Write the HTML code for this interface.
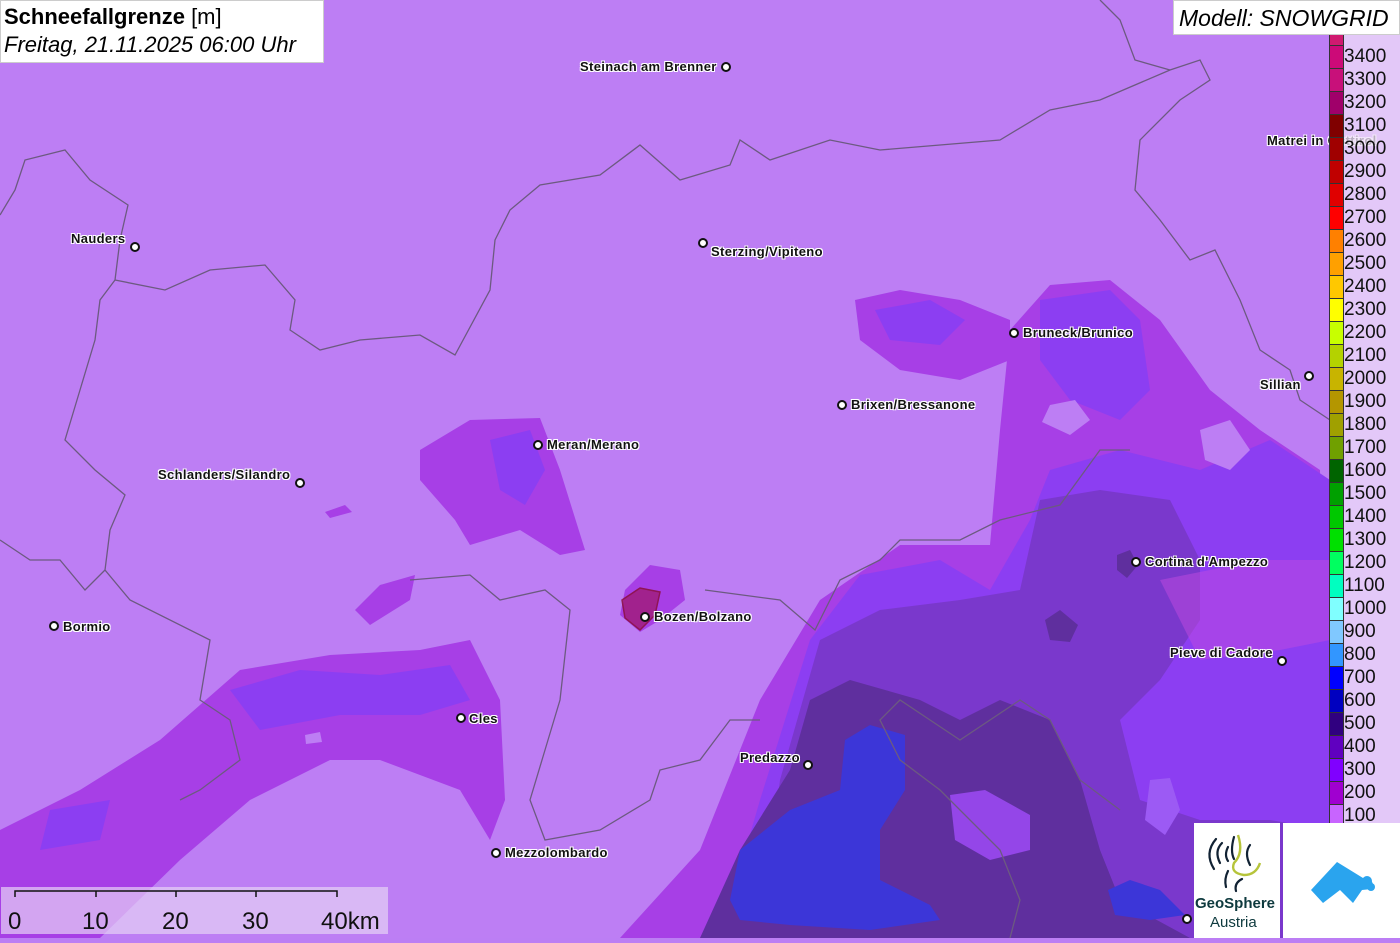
<!DOCTYPE html>
<html><head><meta charset="utf-8"><style>
html,body{margin:0;padding:0;width:1400px;height:938px;overflow:hidden;background:#bc7ef4;font-family:"Liberation Sans",sans-serif}
#map{position:absolute;left:0;top:0}
.lbl{position:absolute;font-weight:bold;font-size:13px;letter-spacing:.35px;color:#111;text-shadow:-1px -1px 0 #fff,1px -1px 0 #fff,-1px 1px 0 #fff,1px 1px 0 #fff;white-space:nowrap}
.dot{position:absolute;width:6px;height:6px;border-radius:50%;background:#fff;border:2px solid #111}
#title{position:absolute;left:0;top:0;width:324px;height:63px;background:#fff;border:1px solid #ccc;box-sizing:border-box}
#title .a{position:absolute;left:3px;top:3px;font-size:22px;color:#000}
#title .b{position:absolute;left:3px;top:31px;font-size:22px;font-style:italic;color:#000}
#model{position:absolute;left:1173px;top:0;width:227px;height:35px;background:#fff;font-size:23px;font-style:italic;box-sizing:border-box;padding:4px 0 0 5px;border:1px solid #ccc}
#legbg{position:absolute;left:1342px;top:35px;width:58px;height:790px;background:rgba(240,225,250,.75)}
#bar{position:absolute;left:1329px;top:35px;width:13px;border:1px solid #333;border-top:none}
#bar div{height:22px;border-bottom:1px solid #333}
.lv{position:absolute;left:1344px;font-size:19px;color:#111}
#scale{position:absolute;left:1px;top:887px;width:387px;height:47px;background:rgba(230,210,245,.7)}
</style></head><body>
<svg id="map" width="1400" height="938" viewBox="0 0 1400 938">
<rect width="1400" height="938" fill="#bd7ef4"/>
<g fill="#a73fe6">
<path d="M620 938 L700 850 L760 700 L820 600 L900 545 L990 545 L1000 430 L1010 330 L1050 285 L1110 280 L1160 320 L1210 390 L1260 430 L1320 470 L1330 938 Z"/>
<path d="M855 300 L900 290 L960 300 L1010 320 L1010 360 L960 380 L900 370 L860 340 Z"/>
<path d="M420 450 L470 420 L540 418 L560 470 L585 550 L560 555 L520 530 L470 545 L455 520 L420 480 Z"/>
<path d="M355 610 L380 585 L415 575 L410 600 L370 625 Z"/>
<path d="M625 590 L650 565 L680 570 L685 600 L660 620 L640 632 L620 615 Z"/>
<path d="M0 830 L80 790 L160 740 L240 670 L330 655 L420 650 L470 640 L500 700 L505 800 L490 840 L460 790 L380 760 L330 760 L250 800 L180 860 L100 938 L0 938 Z"/>
<path d="M325 512 L345 505 L352 512 L330 518 Z"/>
</g>
<g fill="#8c3ef2">
<path d="M720 938 L760 800 L810 640 L860 575 L940 560 L990 590 L1030 520 L1050 470 L1120 450 L1200 470 L1270 440 L1330 480 L1330 938 Z"/>
<path d="M1040 300 L1110 290 L1140 320 L1150 390 L1120 420 L1070 400 L1040 360 Z"/>
<path d="M875 310 L930 300 L965 320 L940 345 L890 340 Z"/>
<path d="M490 440 L530 430 L545 470 L525 505 L500 490 Z"/>
<path d="M230 690 L300 670 L380 675 L450 665 L470 700 L420 715 L340 715 L260 730 Z"/>
<path d="M50 810 L110 800 L100 840 L40 850 Z"/>
</g>
<g fill="#7a38cc">
<path d="M760 938 L780 780 L820 640 L880 610 L960 600 L1020 590 L1040 500 L1100 490 L1170 500 L1200 560 L1200 620 L1160 680 L1120 720 L1140 800 L1200 820 L1270 820 L1330 830 L1330 938 Z"/>
<path d="M1160 580 L1260 560 L1330 560 L1330 640 L1280 650 L1200 660 Z" fill="#c04ae0" opacity=".5"/>
</g>
<g fill="#5f2f9e">
<path d="M700 938 L740 850 L790 770 L810 700 L850 680 L920 700 L960 720 L1000 700 L1050 720 L1080 780 L1100 850 L1120 900 L1190 938 Z"/>
<path d="M1045 620 L1060 610 L1078 625 L1070 642 L1050 640 Z"/>
<path d="M1117 555 L1130 550 L1138 565 L1127 578 L1117 570 Z"/>
</g>
<g fill="#3c36d8">
<path d="M730 900 L740 850 L790 810 L840 790 L845 740 L870 725 L905 735 L905 790 L880 830 L880 880 L930 905 L940 920 L870 930 L790 925 L740 920 Z"/>
<path d="M1108 890 L1130 880 L1160 890 L1185 915 L1150 920 L1115 915 Z"/>
</g>
<g fill="#9446e8">
<path d="M950 795 L985 790 L1030 815 L1030 850 L990 860 L955 840 Z"/>
<path d="M1150 780 L1170 778 L1180 810 L1165 835 L1145 820 Z" fill="#9c5af4"/>
<path d="M1050 405 L1075 400 L1090 420 L1070 435 L1042 422 Z" fill="#bd7ef4"/>
<path d="M1200 430 L1230 420 L1250 450 L1230 470 L1205 460 Z" fill="#bd7ef4"/>
<path d="M305 735 L320 732 L322 742 L306 744 Z" fill="#bd7ef4"/>
</g>
<g fill="none" stroke="#6c5a80" stroke-width="1.3">
<path d="M0 215 L15 190 L25 160 L65 150 L90 180 L128 205 L120 240 L115 280 L100 300 L95 340 L80 390 L65 440 L95 470 L125 495 L110 530 L105 570 L130 600 L210 640 L200 700 L230 720 L240 760 L200 790 L180 800"/>
<path d="M115 280 L165 290 L210 270 L265 265 L295 300 L290 330 L320 350 L360 340 L420 335 L455 355 L490 290 L495 240 L510 210 L540 185 L600 175 L640 145 L680 180 L730 165 L740 140 L770 160 L830 140 L880 150 L1000 140 L1050 110 L1100 100 L1170 70 L1200 60 L1210 80 L1180 100 L1140 140 L1135 190 L1160 220 L1190 260 L1215 250 L1240 300 L1260 350 L1290 370 L1300 400 L1330 420"/>
<path d="M1100 0 L1120 20 L1135 60 L1170 70"/>
<path d="M0 540 L30 560 L60 560 L85 590 L105 570"/>
<path d="M410 580 L470 575 L500 600 L545 590 L570 610 L560 700 L545 750 L530 800 L545 840 L600 830 L650 800 L660 770 L700 760 L730 720 L760 720"/>
<path d="M705 590 L780 600 L815 630 L840 580 L880 560 L900 540 L960 540 L1000 520 L1060 505 L1100 450 L1130 450"/>
<path d="M1120 810 L1080 780 L1050 720 L1020 700 L990 720 L960 740 L930 720 L900 700 L880 720 L900 760 L940 790 L1000 850 L1020 900 L1010 938"/>
</g>
<path d="M622 600 L640 588 L660 592 L655 615 L640 630 L625 618 Z" fill="#a01c78" stroke="#8a0a30" stroke-width="1.5" opacity=".8"/>
</svg>

<div id="title"><div class="a"><b>Schneefallgrenze</b> [m]</div><div class="b">Freitag, 21.11.2025 06:00 Uhr</div></div>
<div id="model">Modell: SNOWGRID</div>

<div class="lbl" style="left:580px;top:59px">Steinach am Brenner</div><div class="dot" style="left:721px;top:62px"></div>
<div class="lbl" style="left:71px;top:231px">Nauders</div><div class="dot" style="left:130px;top:242px"></div>
<div class="lbl" style="left:711px;top:244px">Sterzing/Vipiteno</div><div class="dot" style="left:698px;top:238px"></div>
<div class="lbl" style="left:1267px;top:133px">Matrei in Osttirol</div>
<div class="lbl" style="left:1023px;top:325px">Bruneck/Brunico</div><div class="dot" style="left:1009px;top:328px"></div>
<div class="lbl" style="left:1260px;top:377px">Sillian</div><div class="dot" style="left:1304px;top:371px"></div>
<div class="lbl" style="left:851px;top:397px">Brixen/Bressanone</div><div class="dot" style="left:837px;top:400px"></div>
<div class="lbl" style="left:547px;top:437px">Meran/Merano</div><div class="dot" style="left:533px;top:440px"></div>
<div class="lbl" style="left:158px;top:467px">Schlanders/Silandro</div><div class="dot" style="left:295px;top:478px"></div>
<div class="lbl" style="left:1145px;top:554px">Cortina d'Ampezzo</div><div class="dot" style="left:1131px;top:557px"></div>
<div class="lbl" style="left:654px;top:609px">Bozen/Bolzano</div><div class="dot" style="left:640px;top:612px"></div>
<div class="lbl" style="left:63px;top:619px">Bormio</div><div class="dot" style="left:49px;top:621px"></div>
<div class="lbl" style="left:1170px;top:645px">Pieve di Cadore</div><div class="dot" style="left:1277px;top:656px"></div>
<div class="lbl" style="left:469px;top:711px">Cles</div><div class="dot" style="left:456px;top:713px"></div>
<div class="lbl" style="left:740px;top:750px">Predazzo</div><div class="dot" style="left:803px;top:760px"></div>
<div class="lbl" style="left:505px;top:845px">Mezzolombardo</div><div class="dot" style="left:491px;top:848px"></div>
<div class="dot" style="left:1182px;top:914px"></div>

<div id="legbg"></div>
<div id="bar">
<div style="background:#d01a70;height:10px"></div>
<div style="background:#cc0a78"></div><div style="background:#c8107a"></div><div style="background:#a0006a"></div>
<div style="background:#800000"></div><div style="background:#a00000"></div><div style="background:#c00000"></div>
<div style="background:#e00000"></div><div style="background:#ff0000"></div><div style="background:#ff8000"></div>
<div style="background:#ffa000"></div><div style="background:#ffc800"></div><div style="background:#ffff00"></div>
<div style="background:#c8ff00"></div><div style="background:#b4d200"></div><div style="background:#c8b400"></div>
<div style="background:#b49600"></div><div style="background:#a0a000"></div><div style="background:#70a000"></div>
<div style="background:#006400"></div><div style="background:#00a000"></div><div style="background:#00c800"></div>
<div style="background:#00e000"></div><div style="background:#00ff60"></div><div style="background:#00ffc0"></div>
<div style="background:#80ffff"></div><div style="background:#80c8ff"></div><div style="background:#3296ff"></div>
<div style="background:#0000ff"></div><div style="background:#0000c0"></div><div style="background:#300080"></div>
<div style="background:#6000c0"></div><div style="background:#8000ff"></div><div style="background:#a000d0"></div>
<div style="background:#c864ff;border-bottom:none"></div>
</div>
<div class="lv" style="top:46px">3400</div><div class="lv" style="top:69px">3300</div><div class="lv" style="top:92px">3200</div>
<div class="lv" style="top:115px">3100</div><div class="lv" style="top:138px">3000</div><div class="lv" style="top:161px">2900</div>
<div class="lv" style="top:184px">2800</div><div class="lv" style="top:207px">2700</div><div class="lv" style="top:230px">2600</div>
<div class="lv" style="top:253px">2500</div><div class="lv" style="top:276px">2400</div><div class="lv" style="top:299px">2300</div>
<div class="lv" style="top:322px">2200</div><div class="lv" style="top:345px">2100</div><div class="lv" style="top:368px">2000</div>
<div class="lv" style="top:391px">1900</div><div class="lv" style="top:414px">1800</div><div class="lv" style="top:437px">1700</div>
<div class="lv" style="top:460px">1600</div><div class="lv" style="top:483px">1500</div><div class="lv" style="top:506px">1400</div>
<div class="lv" style="top:529px">1300</div><div class="lv" style="top:552px">1200</div><div class="lv" style="top:575px">1100</div>
<div class="lv" style="top:598px">1000</div><div class="lv" style="top:621px">900</div><div class="lv" style="top:644px">800</div>
<div class="lv" style="top:667px">700</div><div class="lv" style="top:690px">600</div><div class="lv" style="top:713px">500</div>
<div class="lv" style="top:736px">400</div><div class="lv" style="top:759px">300</div><div class="lv" style="top:782px">200</div>
<div class="lv" style="top:805px">100</div>

<div style="position:absolute;left:1194px;top:823px;width:86px;height:115px;background:#fff">
<svg width="86" height="80" viewBox="0 0 86 80">
<g fill="none" stroke="#123" stroke-width="2.2" stroke-linecap="round">
<path d="M28 20 Q20 28 26 40"/><path d="M22 16 Q10 30 20 46"/><path d="M34 24 Q30 32 34 38"/>
<path d="M40 14 Q36 28 40 36"/><path d="M56 22 Q50 30 56 42"/><path d="M48 56 Q40 60 42 68"/><path d="M34 48 Q30 56 32 64"/>
</g>
<path d="M44 12 Q50 30 40 40 Q36 50 50 52 Q62 52 66 40" fill="none" stroke="#b6c43a" stroke-width="2.4"/>
</svg>
<div style="position:absolute;left:1px;top:72px;font-size:15px;font-weight:bold;color:#0e3a3e">GeoSphere</div>
<div style="position:absolute;left:16px;top:91px;font-size:15px;color:#0e3a3e">Austria</div>
</div>
<div style="position:absolute;left:1283px;top:823px;width:117px;height:115px;background:#fff">
<svg width="117" height="115" viewBox="0 0 117 115">
<path d="M28 67 L54 39 L80 55 L86 56 Q92 60 89 66 L79 67 L70 80 L57 67 L40 80 Z" fill="#2aa4ee"/>
<circle cx="84" cy="58" r="5" fill="#2aa4ee"/><circle cx="88" cy="64" r="4" fill="#2aa4ee"/>
</svg>
</div>

<div id="scale">
<svg width="387" height="47" style="position:absolute;left:0;top:0">
<path d="M14 10 V4 H336 V10 M95 4 V10 M175 4 V10 M255 4 V10" fill="none" stroke="#111" stroke-width="1.5"/>
<g font-family="Liberation Sans" font-size="24" fill="#111">
<text x="7" y="42">0</text><text x="81" y="42">10</text><text x="161" y="42">20</text><text x="241" y="42">30</text><text x="320" y="42">40km</text>
</g></svg>
</div>
</body></html>
